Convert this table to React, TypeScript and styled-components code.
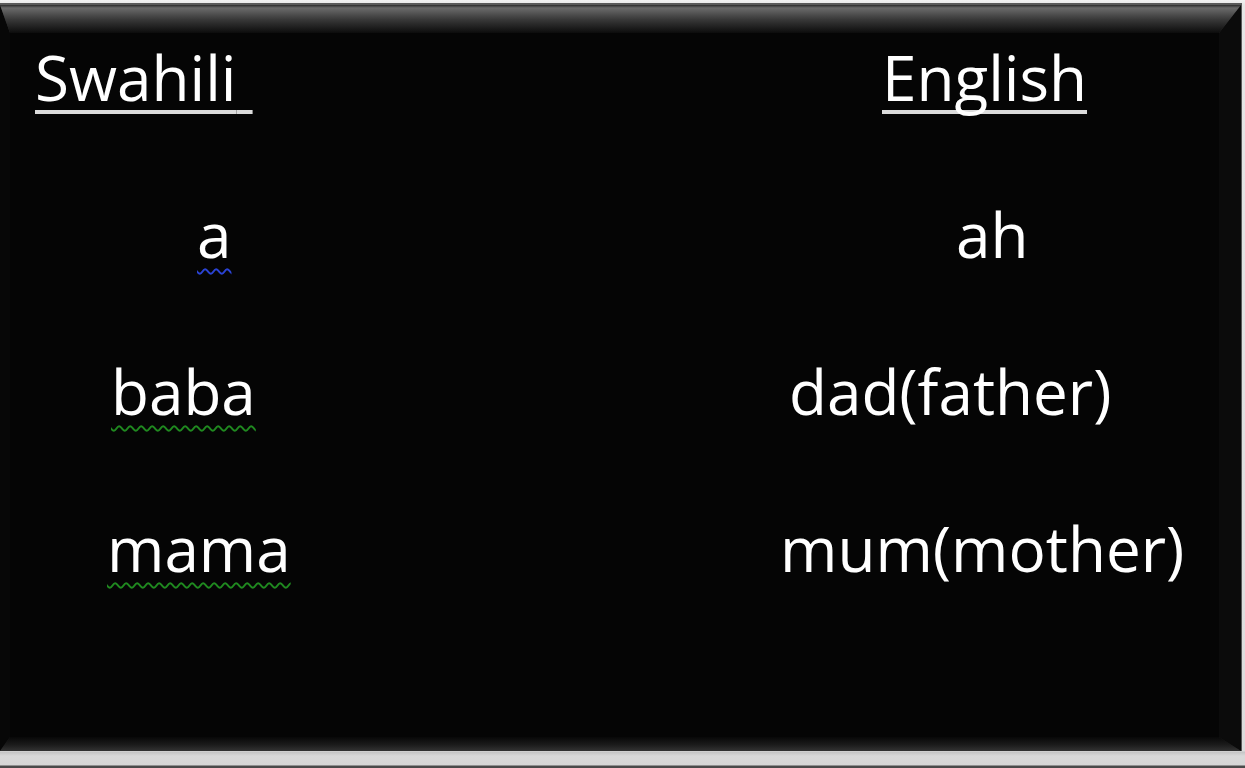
import React from 'react';
import styled, {createGlobalStyle} from "styled-components";

const GlobalStyle = createGlobalStyle`
    html, body {
        margin: 0;
        padding: 0;
        background: #dedede;
    }
    body {
        font-family: "Open Sans", "Noto Sans", sans-serif;
    }
`

type Word = {
    text: string
    indent: number
    check?: "spelling" | "grammar"
}

const rows: Array<[Word, Word]> = [
    [{text: "a", indent: 187, check: "spelling"}, {text: "ah", indent: 196}],
    [{text: "baba", indent: 101, check: "grammar"}, {text: "dad(father)", indent: 29}],
    [{text: "mama", indent: 97, check: "grammar"}, {text: "mum(mother)", indent: 20}],
]

function App() {
    return (
        <Page>
            <GlobalStyle/>
            <Slide>
                <Table>
                    <Cell indent={25}>
                        <Heading>Swahili{"\u00a0"}</Heading>
                    </Cell>
                    <Cell indent={122}>
                        <Heading>English</Heading>
                    </Cell>
                    {rows.map(([sw, en]) => (
                        <React.Fragment key={sw.text}>
                            <Cell indent={sw.indent}>
                                <Term check={sw.check}>{sw.text}</Term>
                            </Cell>
                            <Cell indent={en.indent}>
                                <Term>{en.text}</Term>
                            </Cell>
                        </React.Fragment>
                    ))}
                </Table>
            </Slide>
        </Page>
    );
}

const Page = styled.div`
    width: 1245px;
    height: 768px;
    box-sizing: border-box;
    padding: 5px 4px 17px 0;
    background: linear-gradient(to bottom, #f2f2f2 0, #e6e6e6 5px, #dcdcdc 751px, #c4c4c4 752px, #d9d9d9 756px, #d6d6d6 765px, #4a4a4a 766px);
    overflow: hidden;
`

const Slide = styled.div`
    position: relative;
    height: 100%;
    box-sizing: border-box;
    background: #050505;
    border-style: solid;
    border-width: 28px 22px 14px 10px;
    border-color: #2a2a2a #0b0b0b #1a1a1a #070707;
    box-shadow: 0 -1px 0 1px #5a5a5a, 1px 0 0 #f4f4f4;

    &::before {
        content: "";
        position: absolute;
        top: -28px;
        left: -10px;
        right: -22px;
        height: 28px;
        background: linear-gradient(to bottom, #2c2c2c 0, #6a6a6a 3px, #3a3a3a 14px, #0c0c0c 28px);
        clip-path: polygon(0 0, 100% 0, calc(100% - 22px) 100%, 10px 100%);
    }

    &::after {
        content: "";
        position: absolute;
        bottom: -14px;
        left: -10px;
        right: -22px;
        height: 14px;
        background: linear-gradient(to bottom, #080808 0, #1c1c1c 8px, #333333 14px);
        clip-path: polygon(10px 0, calc(100% - 22px) 0, 100% 100%, 0 100%);
    }
`

const Table = styled.div`
    display: grid;
    grid-template-columns: 750px 1fr;
    grid-auto-rows: 80px;
    row-gap: 77px;
    padding-top: 4px;
    color: #ffffff;
    font-size: 62px;
    font-weight: 500;
    line-height: 80px;
`

const Cell = styled.div<{ indent: number }>`
    padding-left: ${p => p.indent}px;
    white-space: nowrap;
`

const Heading = styled.span`
    text-decoration: underline;
    text-decoration-thickness: 4px;
    text-underline-offset: 9px;
    text-decoration-color: #dcdcdc;
    text-decoration-skip-ink: none;
`

const Term = styled.span<{ check?: "spelling" | "grammar" }>`
    text-decoration: ${p => p.check ? "underline wavy" : "none"};
    text-decoration-color: ${p => p.check === "spelling" ? "#2a43d6" : "#1f8a1f"};
    text-decoration-thickness: 1.5px;
    text-underline-offset: 10px;
    text-decoration-skip-ink: none;
`

export default App;
